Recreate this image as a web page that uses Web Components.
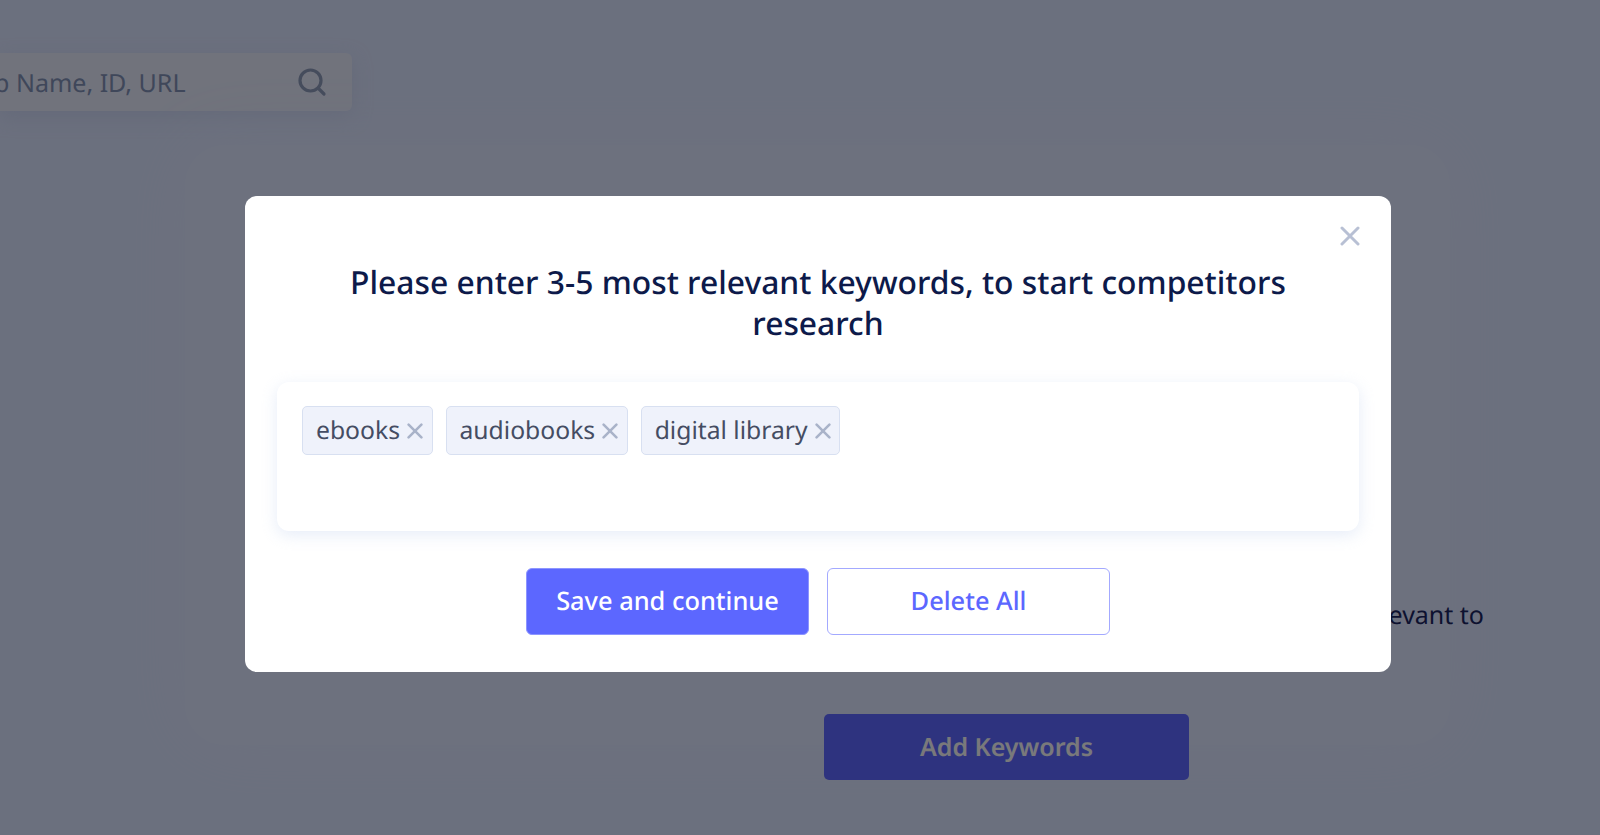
<!DOCTYPE html>
<html>
<head>
<meta charset="utf-8">
<style>
  html, body { margin: 0; height: 100%; overflow: hidden; }
  body { background: #d7e0fc; font-family: "Noto Sans", sans-serif; text-rendering: geometricPrecision; }
</style>
</head>
<body>
<app-page>
  <search-box slot="top"></search-box>
  <p-aside slot="main">relevant to</p-aside>
  <add-button slot="main">Add Keywords</add-button>
</app-page>
<modal-dialog title-text="Please enter 3-5 most relevant keywords, to start competitors research">
  <key-tag>ebooks</key-tag>
  <key-tag>audiobooks</key-tag>
  <key-tag>digital library</key-tag>
</modal-dialog>

<script>
  const crossIcon = (size, stroke) => `
    <svg width="${size}" height="${size}" viewBox="0 0 20 20" fill="none" stroke="currentColor" stroke-width="${stroke}" stroke-linecap="round">
      <path d="M2 2L18 18M18 2L2 18"/>
    </svg>`;

  class AppPage extends HTMLElement {
    constructor() {
      super();
      this.attachShadow({mode: 'open'}).innerHTML = `
        <style>
          :host { display: block; height: 835px; overflow: hidden; box-sizing: border-box; padding-top: 53px; }
          .main {
            margin: 34px 0 0 185px;
            width: 1265px;
            height: 600px;
            box-sizing: border-box;
            padding-top: 452px;
            border-radius: 40px;
            background: #dbe3fd;
            box-shadow: 0 0 70px 0 #dbe3fd;
            display: flex;
            flex-direction: column;
            align-items: flex-end;
          }
        </style>
        <slot name="top"></slot>
        <div class="main"><slot name="main"></slot></div>`;
    }
  }

  class SearchBox extends HTMLElement {
    constructor() {
      super();
      this.attachShadow({mode: 'open'}).innerHTML = `
        <style>
          :host {
            display: flex;
            align-items: center;
            justify-content: flex-end;
            width: 352px;
            height: 58px;
            box-sizing: border-box;
            padding: 0 25px 0 0;
            background: #e2e6f9;
            border-radius: 0 6px 6px 0;
            box-shadow: 0 6px 18px rgba(190,200,235,.5);
            color: #7f8fb5;
            font-size: 25px;
          }
          span { flex: 1; text-align: right; white-space: nowrap; margin-right: 111.5px; overflow: hidden; direction: rtl; padding-top: 2px; }
          svg { display: block; color: #8b98b8; }
        </style>
        <span><bdi>Search by App Name, ID, URL</bdi></span>
        <svg width="30" height="30" viewBox="0 0 30 30" fill="none" stroke="currentColor" stroke-width="3.2" stroke-linecap="round">
          <circle cx="13.5" cy="13.5" r="10.5"/><path d="M21.5 21.5L27 27"/>
        </svg>`;
    }
  }

  class PAside extends HTMLElement {
    constructor() {
      super();
      this.attachShadow({mode: 'open'}).innerHTML = `
        <style>
          :host { display: block; flex: none; margin: 0 -34px 0 0; font-size: 25px; line-height: 36px; color: #1b2560; white-space: nowrap; }
        </style>
        <slot></slot>`;
    }
  }

  class AddButton extends HTMLElement {
    constructor() {
      super();
      this.attachShadow({mode: 'open'}).innerHTML = `
        <style>
          :host {
            display: flex; flex: none; align-items: center; justify-content: center;
            width: 365px; height: 66px;
            margin: 81px 261px 0 0;
            padding-bottom: 1px; box-sizing: border-box;
            background: #5c67ff; color: #f2f2f6;
            border-radius: 5px;
            font-size: 25px; font-weight: 600;
          }
        </style>
        <slot></slot>`;
    }
  }

  class KeyTag extends HTMLElement {
    constructor() {
      super();
      this.attachShadow({mode: 'open'}).innerHTML = `
        <style>
          :host {
            display: inline-flex; align-items: center; gap: 7px;
            height: 49px; box-sizing: border-box;
            padding: 0 8.5px 1px 13px;
            background: #eff2fb;
            border: 1.5px solid #d8e0f1;
            border-radius: 5px;
            color: #454d63;
            font-size: 24.7px;
            white-space: nowrap;
          }
          span { display: flex; color: #a9b3c9; padding-top: 1px; }
        </style>
        <slot></slot>
        <span>${crossIcon(16, 3.2)}</span>`;
    }
  }

  class ModalDialog extends HTMLElement {
    constructor() {
      super();
      this.attachShadow({mode: 'open'}).innerHTML = `
        <style>
          :host {
            position: fixed; inset: 0;
            display: block;
            box-sizing: border-box;
            padding: 196px 0 0 245px;
            background: rgba(0,0,0,.5);
          }
          .modal {
            position: relative;
            width: 1146px; height: 476px;
            box-sizing: border-box;
            padding: 66px 32px 37px;
            background: #fff;
            border-radius: 12px;
            display: flex; flex-direction: column;
          }
          .close { position: absolute; top: 30px; right: 31px; color: #b8c0d4; display: flex; }
          h2 {
            margin: 0 auto; width: 1000px;
            text-align: center;
            font-size: 31.8px; line-height: 41px; font-weight: 500;
            color: #0d1a4a;
          }
          .card {
            margin-top: 38px; height: 149px;
            box-sizing: border-box;
            padding: 24px 25px;
            background: #fff;
            border-radius: 12px;
            box-shadow: 0 4px 16px rgba(200,212,240,.45);
            display: flex; align-items: flex-start; gap: 13px;
          }
          .actions { margin-top: 37px; display: flex; justify-content: center; gap: 18px; }
          button {
            width: 283px; height: 67px;
            box-sizing: border-box;
            border-radius: 6px;
            padding-bottom: 2px;
            font: 500 25.4px "Noto Sans", sans-serif;
            text-rendering: geometricPrecision;
          }
          .primary { background: #5c67ff; border: 1.5px solid #8d95ff; color: #fff; }
          .secondary { background: #fff; border: 1.5px solid #a3a9ff; color: #5c67ff; }
        </style>
        <div class="modal">
          <span class="close">${crossIcon(20, 3)}</span>
          <h2>${this.getAttribute('title-text')}</h2>
          <div class="card"><slot></slot></div>
          <div class="actions">
            <button class="primary">Save and continue</button>
            <button class="secondary">Delete All</button>
          </div>
        </div>`;
    }
  }

  window.customElements.define('app-page', AppPage);
  window.customElements.define('search-box', SearchBox);
  window.customElements.define('p-aside', PAside);
  window.customElements.define('add-button', AddButton);
  window.customElements.define('key-tag', KeyTag);
  window.customElements.define('modal-dialog', ModalDialog);
</script>
</body>
</html>
